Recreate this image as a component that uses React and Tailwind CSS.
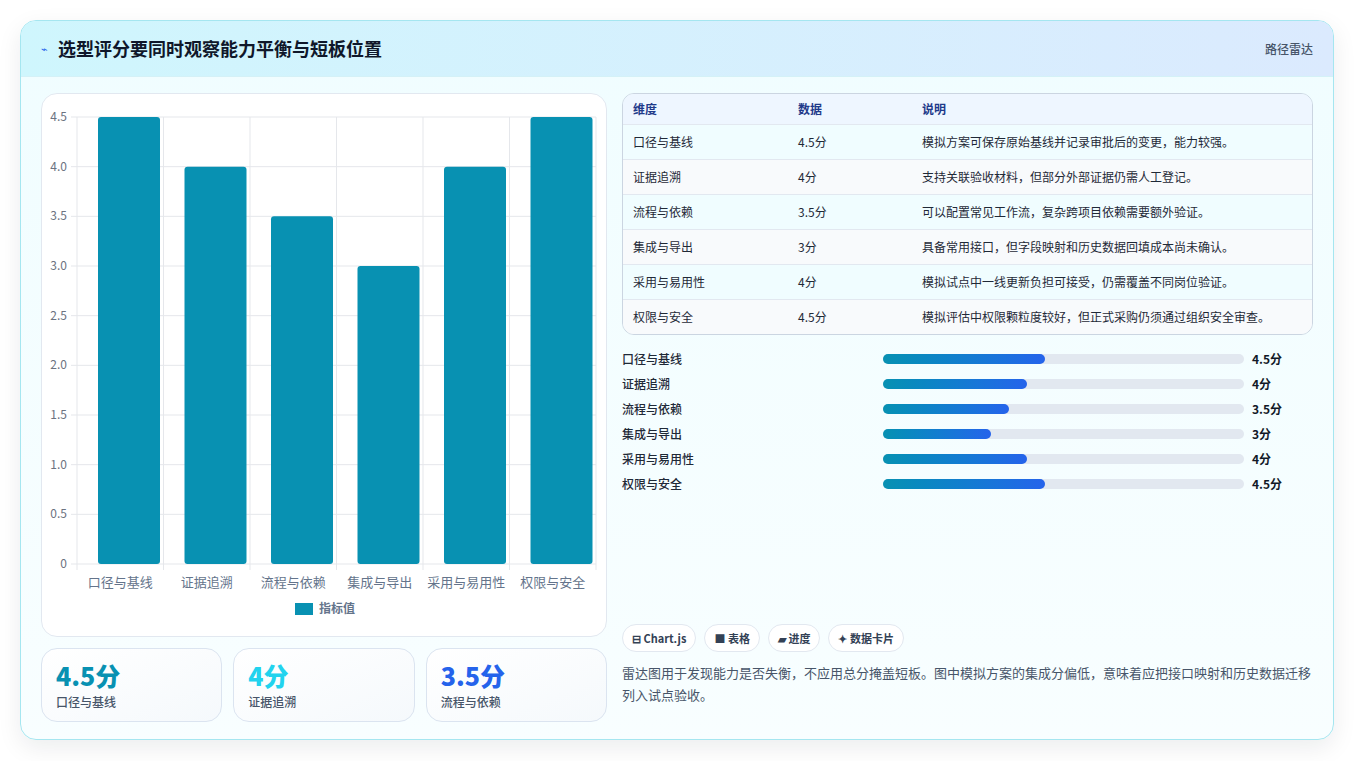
import React from 'react';

const rows = [
  { name: '口径与基线', v: 4.5, note: '模拟方案可保存原始基线并记录审批后的变更，能力较强。' },
  { name: '证据追溯', v: 4, note: '支持关联验收材料，但部分外部证据仍需人工登记。' },
  { name: '流程与依赖', v: 3.5, note: '可以配置常见工作流，复杂跨项目依赖需要额外验证。' },
  { name: '集成与导出', v: 3, note: '具备常用接口，但字段映射和历史数据回填成本尚未确认。' },
  { name: '采用与易用性', v: 4, note: '模拟试点中一线更新负担可接受，仍需覆盖不同岗位验证。' },
  { name: '权限与安全', v: 4.5, note: '模拟评估中权限颗粒度较好，但正式采购仍须通过组织安全审查。' },
];

const font = { fontFamily: '"Noto Sans CJK SC", "Noto Sans", sans-serif' };

const Chart = () => {
  const L = 35, R = 554, T = 23, B = 470;
  const step = (R - L) / 6;
  const y = (v) => B - (v / 4.5) * (B - T);
  const ticks = [0, 0.5, 1, 1.5, 2, 2.5, 3, 3.5, 4, 4.5];
  return (
    <svg width="566" height="544" viewBox="0 0 566 544" style={font}>
      {ticks.map((t) => (
        <g key={t}>
          <line x1={L - 6} x2={R} y1={y(t)} y2={y(t)} stroke="#e5e7eb" />
          <text x={L - 10} y={y(t) + 4} fontSize="12" fill="#6b7280" textAnchor="end">{t === 0 ? '0' : t.toFixed(1)}</text>
        </g>
      ))}
      {[0, 1, 2, 3, 4, 5, 6].map((i) => (
        <line key={i} x1={L + i * step} x2={L + i * step} y1={T} y2={B + 6} stroke="#e5e7eb" />
      ))}
      {rows.map((r, i) => (
        <g key={r.name}>
          <rect x={L + i * step + 21} y={y(r.v)} width={62} height={B - y(r.v)} rx="3" fill="#0891b2" />
          <text x={L + i * step + step / 2} y={B + 23} fontSize="13" fill="#64748b" textAnchor="middle">{r.name}</text>
        </g>
      ))}
      <rect x="253" y="509" width="18" height="12" fill="#0891b2" />
      <text x="277" y="519" fontSize="12" fill="#64748b" fontWeight="600">指标值</text>
    </svg>
  );
};

const Stat = ({ v, label, color }) => (
  <div className="flex-1 rounded-2xl border border-[#dbe4f0] bg-gradient-to-br from-white to-[#f5f9fc] px-[14px] py-[10px]">
    <div className={`text-[25px] font-extrabold leading-[32px] ${color}`}>{v}</div>
    <div className="mt-[2px] text-[12px] font-medium text-[#475569]">{label}</div>
  </div>
);

export default function App() {
  return (
    <div className="min-h-screen bg-white p-5" style={font}>
      <div className="h-[720px] overflow-hidden rounded-2xl border border-[#a5e6f0] bg-gradient-to-b from-[#f0fdff] to-[#f8feff] shadow-[0_8px_24px_rgba(15,23,42,0.08)]">
        <div className="flex h-[56px] items-center justify-between border-b border-[#d4f1f7] bg-gradient-to-r from-[#cff6fd] to-[#dbeafe] px-5">
          <div className="flex items-center gap-[10px]">
            <span className="text-[11px] text-[#2563eb]">⌁</span>
            <h1 className="text-[18px] font-bold text-[#0f172a]">选型评分要同时观察能力平衡与短板位置</h1>
          </div>
          <span className="text-[12px] font-medium text-[#475569]">路径雷达</span>
        </div>
        <div className="flex gap-[15px] px-5 pt-4">
          <div className="flex w-[566px] flex-col gap-[11px]">
            <div className="h-[544px] rounded-2xl border border-[#e2e8f0] bg-white">
              <Chart />
            </div>
            <div className="flex gap-[11px]">
              <Stat v="4.5分" label="口径与基线" color="text-[#0891b2]" />
              <Stat v="4分" label="证据追溯" color="text-[#22d3ee]" />
              <Stat v="3.5分" label="流程与依赖" color="text-[#2563eb]" />
            </div>
          </div>
          <div className="flex flex-1 flex-col">
            <div className="overflow-hidden rounded-xl border border-[#cbd5e1]">
              <table className="w-full text-left text-[12px]">
                <thead>
                  <tr className="h-[30px] bg-[#eef6ff] text-[#1e3a8a]">
                    <th className="w-[175px] pl-[10px] font-semibold">维度</th>
                    <th className="w-[124px] font-semibold">数据</th>
                    <th className="font-semibold">说明</th>
                  </tr>
                </thead>
                <tbody>
                  {rows.map((r, i) => (
                    <tr key={r.name} className={`h-[35px] border-t border-[#e2e8f0] text-[#1f2937] ${i % 2 ? 'bg-[#f8fafc]' : 'bg-[#f0fdff]'}`}>
                      <td className="pl-[10px]">{r.name}</td>
                      <td>{r.v}分</td>
                      <td>{r.note}</td>
                    </tr>
                  ))}
                </tbody>
              </table>
            </div>
            <div className="mt-[11px] flex flex-col">
              {rows.map((r) => (
                <div key={r.name} className="flex h-[25px] items-center text-[12px] font-medium text-[#1f2937]">
                  <span className="w-[261px]">{r.name}</span>
                  <div className="h-[10px] w-[361px] rounded-full bg-[#e2e8f0]">
                    <div className="h-full rounded-full bg-gradient-to-r from-[#0891b2] to-[#2563eb]" style={{ width: `${r.v * 10}%` }} />
                  </div>
                  <span className="ml-[8px] font-bold text-[#111827]">{r.v}分</span>
                </div>
              ))}
            </div>
            <div className="mt-auto flex gap-[8px]">
              {['⊟ Chart.js', '■ 表格', '▰ 进度', '✦ 数据卡片'].map((t) => (
                <span key={t} className="rounded-full border border-[#e2e8f0] bg-white px-[9px] py-[5px] text-[11px] font-semibold text-[#334155]">{t}</span>
              ))}
            </div>
            <p className="mb-[16px] mt-[10px] text-[13px] leading-[22px] text-[#475569]">
              雷达图用于发现能力是否失衡，不应用总分掩盖短板。图中模拟方案的集成分偏低，意味着应把接口映射和历史数据迁移列入试点验收。
            </p>
          </div>
        </div>
      </div>
    </div>
  );
}
